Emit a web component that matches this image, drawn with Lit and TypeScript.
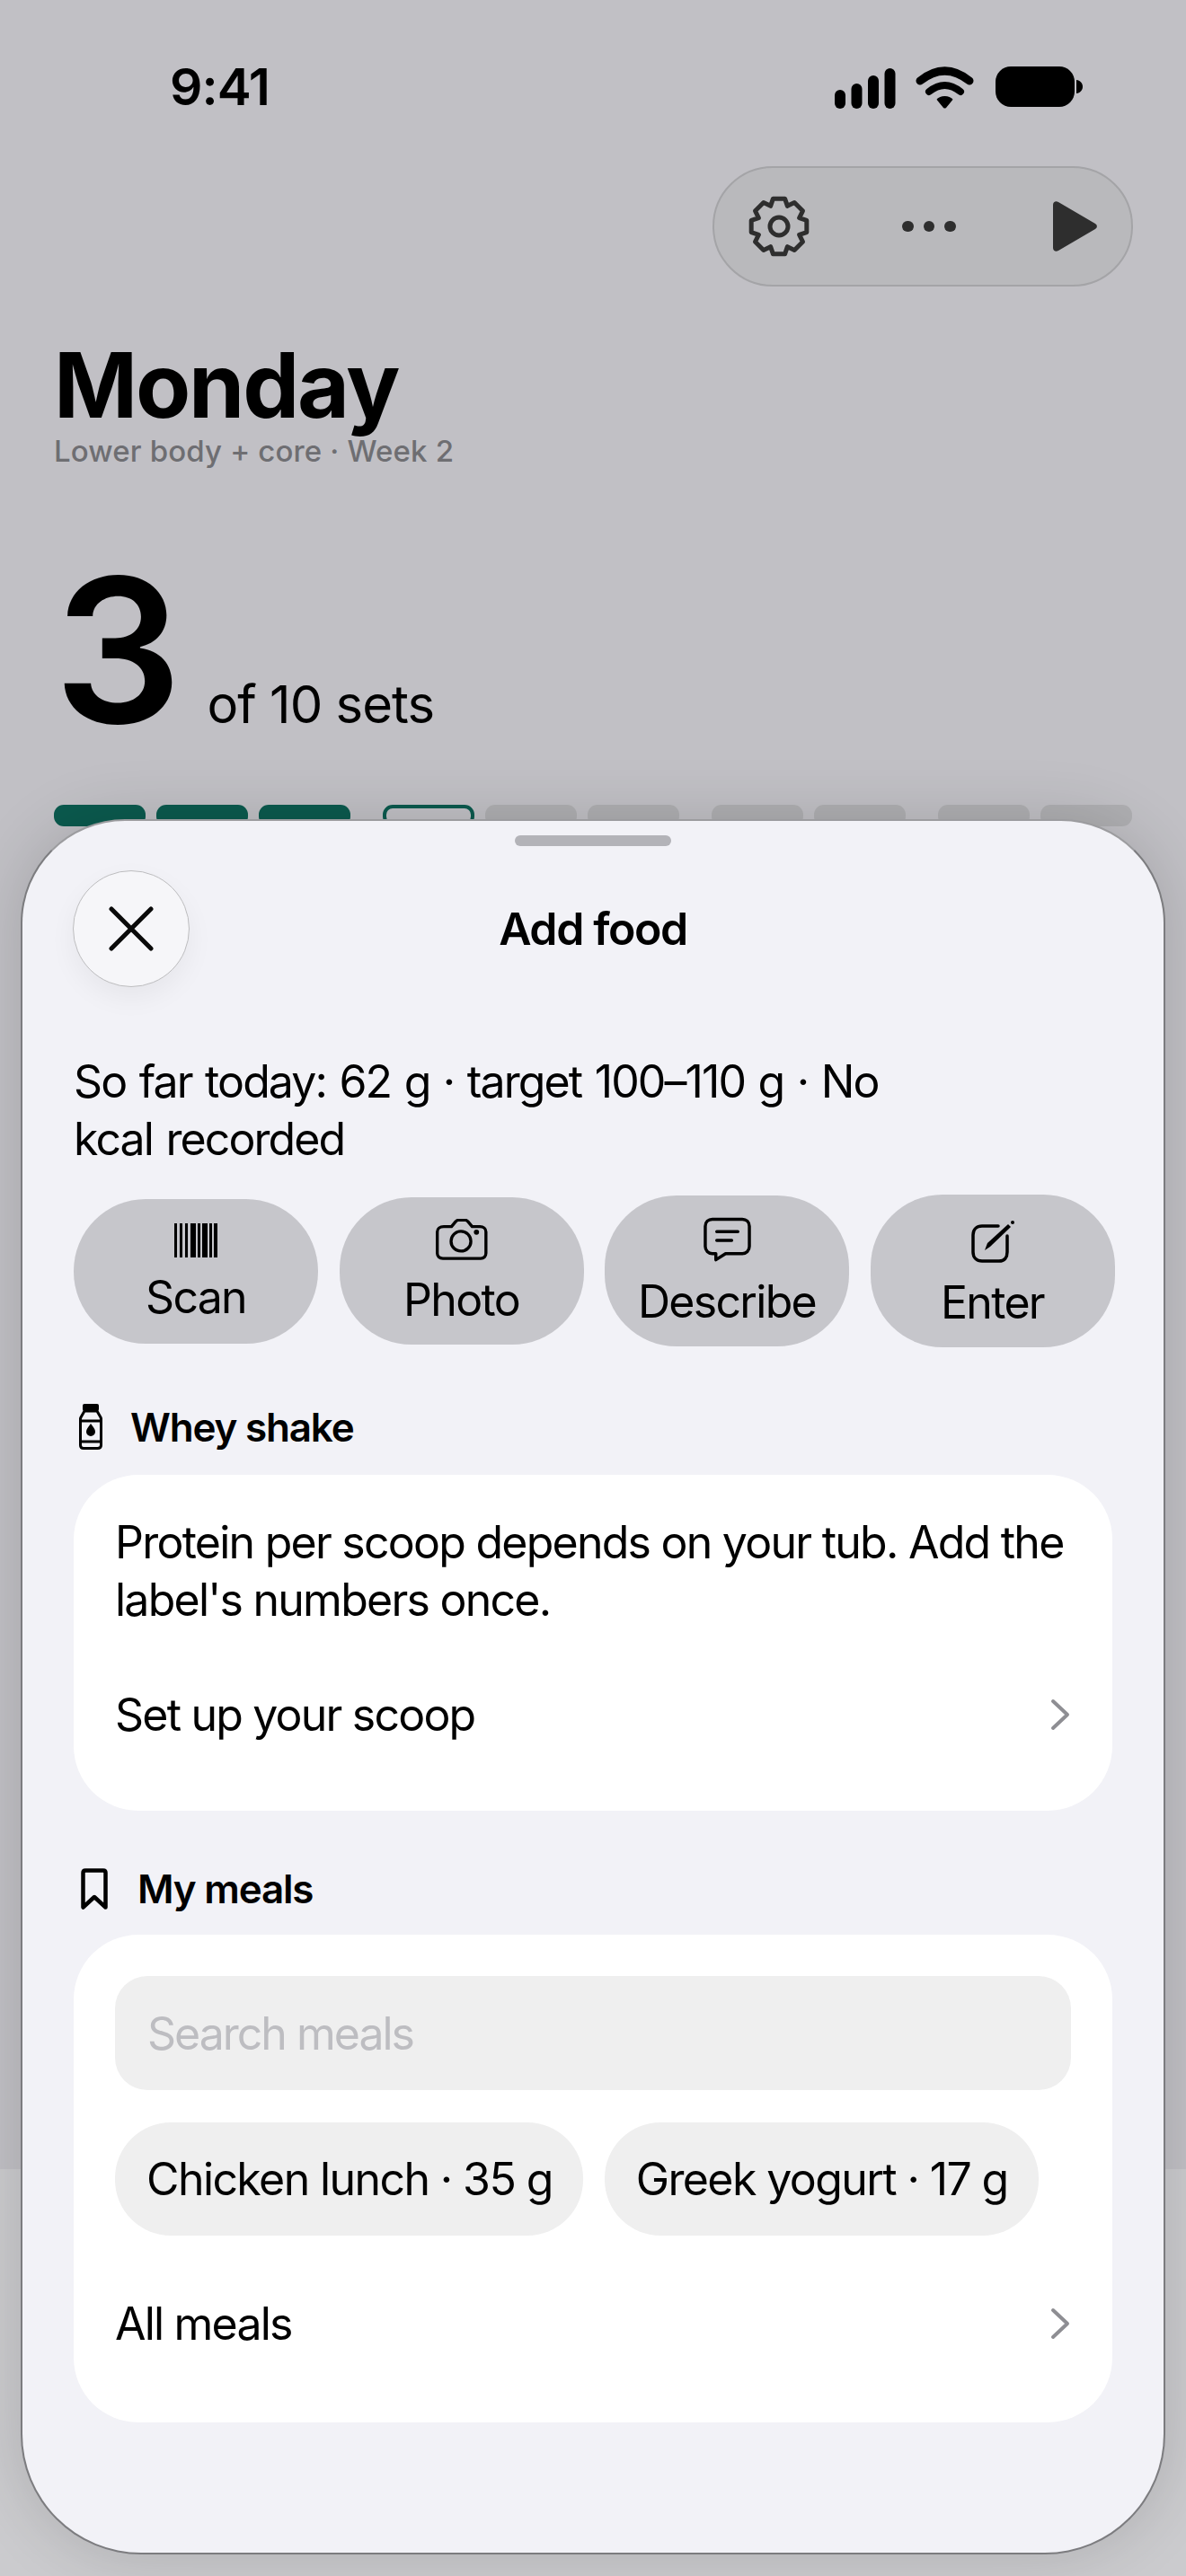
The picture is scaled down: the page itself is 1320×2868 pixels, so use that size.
import { LitElement, html, svg, css } from 'lit';
import { customElement } from 'lit/decorators.js';

const chevron = html`<svg class="chev" width="24" height="36" viewBox="0 0 24 36" fill="none" stroke="#8e8e93" stroke-width="4" stroke-linecap="round" stroke-linejoin="round"><path d="M4 3l16 15-16 15"/></svg>`;

// barcode strokes as [x, width] on a 48 wide box
const bars = [[0,3],[6,3],[12,3],[18,6],[26,3],[31,6],[39,3],[44,4]];

// eight teeth, each one two outer points and a valley
function gearPath() {
  const pt = (r: number, deg: number) => {
    const a = (deg * Math.PI) / 180;
    return `${(35 + r * Math.sin(a)).toFixed(2)} ${(35 - r * Math.cos(a)).toFixed(2)}`;
  };
  const out: string[] = [];
  for (let i = 0; i < 8; i++) {
    const a = i * 45;
    out.push(pt(31.5, a - 12), pt(31.5, a + 12), pt(24.5, a + 22.5));
  }
  return 'M' + out.join('L') + 'z';
}

const icons = {
  scan: html`<svg width="48" height="38" viewBox="0 0 48 38" fill="#000">${bars.map(([x, w]) => svg`<rect x=${x} y="0" width=${w} height="38"/>`)}</svg>`,
  photo: html`<svg width="58" height="46" viewBox="0 0 60 48" fill="none" stroke="#000" stroke-width="3.5" stroke-linejoin="round"><path d="M9 9h9l5-6c1-1 2-1.500 3-1.500h8c1 0 2 .5 3 1.500l5 6h9c4 0 7 2.500 7 6v25c0 3.500-2.500 6-6 6H8c-4 0-6.500-2.500-6.500-6V15c0-3.500 3-6 7.500-6z"/><circle cx="29" cy="26" r="11.500"/><circle cx="47" cy="15.500" r="3" fill="#000" stroke="none"/></svg>`,
  describe: html`<svg width="53" height="50" viewBox="0 0 54 50" fill="none" stroke="#000" stroke-width="3.5" stroke-linejoin="round" stroke-linecap="round"><path d="M10 2h34c4.500 0 8 3 8 8v23c0 4.500-3.500 8-8 8H25L14 48v-7h-4c-4.500 0-8-3.500-8-8V10c0-5 3.500-8 8-8z"/><path d="M15 16h24M15 26h17"/></svg>`,
  enter: html`<svg width="48" height="47" viewBox="0 0 48 47" fill="none" stroke="#000" stroke-width="3.5" stroke-linecap="round" stroke-linejoin="round"><path d="M30 6H12C6 6 2 10 2 16v19c0 6 4 10 10 10h19c6 0 9-4 9-10V17"/><path d="M15 33l3-8L41 4l3 3-23 22z" fill="#000" stroke="none"/><circle cx="46" cy="2" r="2" fill="#000" stroke="none"/></svg>`,
};

const actions = [
  { label: 'Scan', icon: icons.scan, h: 161, top: 27 },
  { label: 'Photo', icon: icons.photo, h: 164, top: 24 },
  { label: 'Describe', icon: icons.describe, h: 168, top: 24 },
  { label: 'Enter', icon: icons.enter, h: 170, top: 29 },
];

@customElement('app-root')
export class AppRoot extends LitElement {
  static styles = css`
    :host {
      display: block;
      width: 1320px;
      height: 2868px;
      overflow: hidden;
      position: relative;
      background: #c1c0c5;
      font-family: Inter, 'Noto Sans', sans-serif;
      color: #000;
    }
    .page {
      height: 2868px;
      box-sizing: border-box;
      padding: 0 60px;
      display: flex;
      flex-direction: column;
    }
    .status {
      height: 180px;
      margin: 0 -60px;
      padding: 0 111px 0 189px;
      box-sizing: border-box;
      display: flex;
      justify-content: space-between;
      align-items: flex-start;
    }
    .time {
      font-size: 57px;
      font-weight: 600;
      line-height: 66px;
      margin-top: 64px;
      letter-spacing: -1px;
    }
    .status svg { margin-top: 74px; }
    .tools {
      align-self: flex-end;
      margin: 5px -1px 0 0;
      width: 468px;
      height: 134px;
      box-sizing: border-box;
      border: 2px solid #a4a4a7;
      border-radius: 67px;
      background: #b9b9bc;
      display: flex;
      align-items: center;
      justify-content: space-between;
      padding: 0 37px;
    }
    .dots { display: flex; gap: 11px; margin-right: 6px; }
    .dots i { width: 12.5px; height: 12.5px; border-radius: 50%; background: #2e2e2e; display: block; }
    h1 {
      margin: 60px 0 0;
      font-size: 100px;
      font-weight: 700;
      line-height: 100px;
      letter-spacing: -2.2px;
    }
    .sub {
      font-size: 33px;
      line-height: 40px;
      color: #6e6e72;
      margin-top: 3px;
      font-weight: 500;
      letter-spacing: .15px;
    }
    .count {
      display: flex;
      align-items: baseline;
      gap: 32px;
      margin-top: 82px;
    }
    .big { font-size: 224px; font-weight: 600; line-height: 240px; letter-spacing: -4px; }
    .of { font-size: 58px; line-height: 70px; letter-spacing: -1px; }
    .progress {
      display: flex;
      gap: 36px;
      margin-top: 52px;
    }
    .group { display: flex; gap: 12px; }
    .seg { width: 102px; height: 24px; border-radius: 11px; background: #afafb2; box-sizing: border-box; }
    .seg.done { background: #0b5a4e; }
    .seg.now { background: #c1c0c5; border: 4px solid #0b5a4e; }
    .scrim-bottom {
      position: absolute;
      left: 0;
      right: 0;
      top: 2415px;
      bottom: 0;
      background: #cbcbce;
    }
    .sheet {
      position: absolute;
      left: 23px;
      right: 23px;
      top: 912px;
      height: 1932px;
      box-sizing: border-box;
      background: #f2f2f7;
      border: 2px solid #7c7c7f;
      border-top-color: #9c9c9f;
      border-radius: 116px 116px 134px 134px;
      box-shadow: 0 0 70px rgba(0, 0, 0, .15);
      padding: 16px 57px 0;
    }
    .grab {
      width: 174px;
      height: 12px;
      border-radius: 6px;
      background: #b3b3b8;
      margin: 0 auto;
    }
    .head {
      height: 130px;
      margin-top: 27px;
      display: flex;
      align-items: center;
      justify-content: center;
      position: relative;
    }
    .close {
      position: absolute;
      left: -1px;
      top: 0;
      width: 130px;
      height: 130px;
      box-sizing: border-box;
      border-radius: 50%;
      background: #f6f6f9;
      border: 1.5px solid #bdbdbf;
      box-shadow: 0 12px 30px rgba(0, 0, 0, .05);
      display: flex;
      align-items: center;
      justify-content: center;
    }
    .title { font-size: 50px; font-weight: 600; letter-spacing: -1.4px; }
    .today {
      font-size: 50px;
      line-height: 64px;
      margin: 73px 0 0;
      width: 960px;
      letter-spacing: -1.9px;
      word-spacing: 2.3px;
    }
    .actions {
      height: 170px;
      margin-top: 30px;
      display: flex;
      gap: 23.5px;
      align-items: center;
    }
    .action {
      width: 272px;
      flex: none;
      border-radius: 80px;
      background: #c6c6cb;
      display: flex;
      flex-direction: column;
      align-items: center;
      box-sizing: border-box;
      font-size: 50px;
      line-height: 60px;
      letter-spacing: -1.7px;
    }
    .action svg { display: block; }
    .action .lb { margin-top: 14px; }
    .sec {
      display: flex;
      align-items: center;
      font-size: 44px;
      line-height: 44px;
      font-weight: 600;
      letter-spacing: -1.2px;
    }
    .sec svg { display: block; flex: none; }
    .whey { margin-top: 63px; padding-left: 6px; gap: 31px; }
    .mine { margin-top: 64px; padding-left: 8px; gap: 33px; }
    .card {
      background: #fff;
      border-radius: 72px;
      box-sizing: border-box;
      margin-top: 28px;
    }
    .card.info { height: 374px; padding: 43px 46px 0; }
    .card.meals { height: 543px; padding: 46px 46px 0; }
    .card p {
      margin: 0;
      font-size: 50px;
      line-height: 64px;
      letter-spacing: -1.75px;
    }
    .row {
      display: flex;
      align-items: center;
      justify-content: space-between;
      height: 60px;
      font-size: 50px;
      letter-spacing: -1.8px;
    }
    .info .row { margin-top: 66px; }
    .meals .row { margin-top: 68px; }
    .search {
      height: 127px;
      border-radius: 36px;
      background: #efefef;
      color: #bdbdc1;
      font-size: 50px;
      letter-spacing: -2px;
      display: flex;
      align-items: center;
      padding-left: 36px;
    }
    .chips { display: flex; gap: 24px; margin-top: 36px; }
    .chip {
      height: 126px;
      border-radius: 62px;
      background: #efefef;
      padding: 0 34px 0 35px;
      display: flex;
      align-items: center;
      font-size: 50px;
      letter-spacing: -1.6px;
      white-space: nowrap;
    }
  `;

  render() {
    return html`
      <div class="page">
        <div class="status">
          <div class="time">9:41</div>
          <svg width="280" height="48" viewBox="0 0 280 48" fill="#000">
            <rect x="0" y="26" width="12" height="21" rx="6"/>
            <rect x="18.5" y="19" width="12" height="28" rx="6"/>
            <rect x="37" y="10" width="12" height="37" rx="6"/>
            <rect x="55.5" y="2" width="12" height="45" rx="6"/>
            <path fill="none" stroke="#000" stroke-width="9" stroke-linecap="round" d="M95 16Q122.500 -6 150 16"/>
            <path fill="none" stroke="#000" stroke-width="8" stroke-linecap="round" d="M105 28Q122.500 14 140 28"/>
            <path d="M122.500 33c-4 0-7 1.500-8.500 3-.5.5-.5 1 0 1.500l7 8.500q1.500 1 3 0l7-8.500c.5-.5.5-1 0-1.500-1.500-1.500-4.500-3-8.500-3z"/>
            <rect x="179" y="0" width="88" height="45" rx="17"/>
            <path d="M269 15c4 .5 7 3.500 7 7.500s-3 7-7 7.500z"/>
          </svg>
        </div>
        <div class="tools">
          <svg width="70" height="70" viewBox="0 0 70 70" fill="none" stroke="#2e2e2e" stroke-width="5" stroke-linejoin="round"><path d=${gearPath()}/><circle cx="35" cy="35" r="10"/></svg>
          <div class="dots"><i></i><i></i><i></i></div>
          <svg width="50" height="56" viewBox="0 0 50 56" fill="#2e2e2e"><path d="M0 4c0-3 3-5 6-3l41 24c2.500 1.500 2.500 4.500 0 6L6 55c-3 2-6 0-6-3z"/></svg>
        </div>
        <h1>Monday</h1>
        <div class="sub">Lower body + core · Week 2</div>
        <div class="count"><span class="big">3</span><span class="of">of 10 sets</span></div>
        <div class="progress">
          <div class="group"><div class="seg done"></div><div class="seg done"></div><div class="seg done"></div></div>
          <div class="group"><div class="seg now"></div><div class="seg"></div><div class="seg"></div></div>
          <div class="group"><div class="seg"></div><div class="seg"></div></div>
          <div class="group"><div class="seg"></div><div class="seg"></div></div>
        </div>
      </div>
      <div class="scrim-bottom"></div>
      <div class="sheet">
        <div class="grab"></div>
        <div class="head">
          <div class="close">
            <svg width="50" height="50" viewBox="0 0 50 50" stroke="#0a0a0a" stroke-width="5" stroke-linecap="round"><path d="M3 3l44 44M47 3L3 47"/></svg>
          </div>
          <div class="title">Add food</div>
        </div>
        <p class="today">So far today: 62 g · target 100–110 g · No kcal recorded</p>
        <div class="actions">
          ${actions.map(a => html`<div class="action" style="height:${a.h}px;padding-top:${a.top}px">${a.icon}<div class="lb">${a.label}</div></div>`)}
        </div>
        <div class="sec whey">
          <svg width="26" height="51" viewBox="0 0 26 51" fill="none" stroke="#000" stroke-width="3" stroke-linejoin="round"><rect x="4" y="0" width="18" height="8" rx="2" fill="#000" stroke="none"/><path d="M6 8h14l4 7c.8 1.500 .5 2 .5 4v27c0 2.500-1.500 3.500-4 3.500H5c-2.500 0-3.500-1-3.500-3.500V19c0-2-.3-2.500.5-4z"/><path d="M2 19h22M2 42h22"/><path d="M13 22c3 4 5 6.500 5 9a5 5 0 0 1-10 0c0-2.500 2-5 5-9z" fill="#000" stroke="none"/></svg>
          Whey shake
        </div>
        <div class="card info">
          <p>Protein per scoop depends on your tub. Add the label's numbers once.</p>
          <div class="row">Set up your scoop ${chevron}</div>
        </div>
        <div class="sec mine">
          <svg width="30" height="46" viewBox="0 0 30 46" fill="none" stroke="#000" stroke-width="4.5" stroke-linejoin="round"><path d="M5 2.500h20c1.500 0 2.500 1 2.500 2.500v38.500L15 32 2.500 43.500V5c0-1.500 1-2.500 2.500-2.500z"/></svg>
          My meals
        </div>
        <div class="card meals">
          <div class="search">Search meals</div>
          <div class="chips"><div class="chip">Chicken lunch · 35 g</div><div class="chip">Greek yogurt · 17 g</div></div>
          <div class="row">All meals ${chevron}</div>
        </div>
      </div>
    `;
  }
}
